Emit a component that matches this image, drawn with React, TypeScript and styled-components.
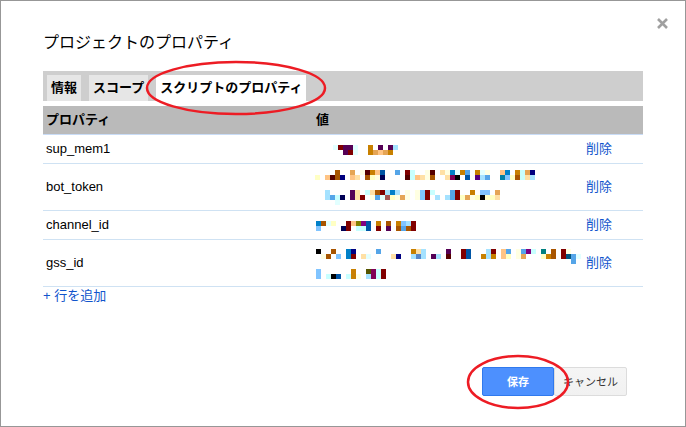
import React from "react";
import styled, { createGlobalStyle } from "styled-components";

const GlobalStyle = createGlobalStyle`
  *, *::before, *::after { box-sizing: border-box; }
  body {
    margin: 0;
    background: #fff;
    color: #000;
    font-family: "Liberation Sans", "Noto Sans CJK JP", sans-serif;
    font-size: 13px;
    line-height: 20px;
  }
`;

const Dialog = styled.main`
  position: relative;
  display: flex;
  flex-direction: column;
  min-height: 100vh;
  padding: 30px 42px 28px;
  border: 1px solid #979797;
`;

const CloseButton = styled.button`
  position: absolute;
  top: 16px;
  right: 16px;
  display: flex;
  padding: 0;
  border: 0;
  background: none;
  cursor: pointer;
`;

const Title = styled.h1`
  margin: 0 0 16px;
  font-size: 16px;
  font-weight: 400;
  line-height: 24px;
`;

const TabBar = styled.div`
  display: flex;
  gap: 8px;
  margin-bottom: 5px;
  padding: 4px 4px 0;
  background: #cecece;
`;

const Tab = styled.button<{ $active?: boolean }>`
  position: relative;
  height: 26px;
  padding: 0 4px;
  border: 0;
  background: ${(p) => (p.$active ? "#fff" : "#e6e6e6")};
  color: #000;
  font: inherit;
  font-weight: 700;
  white-space: nowrap;
  cursor: pointer;
`;

const Table = styled.table`
  width: 100%;
  table-layout: fixed;
  border-collapse: separate;
  border-spacing: 0;
`;

const Column = styled.col<{ $share: number }>`
  width: ${(p) => p.$share}%;
`;

const HeadCell = styled.th`
  height: 29px;
  padding: 0 3px;
  border-bottom: 1px solid #c9dcf6;
  background: #bababa;
  background-clip: padding-box;
  text-align: left;
`;

const Cell = styled.td<{ $tall: boolean }>`
  height: ${(p) => (p.$tall ? 47 : 29)}px;
  padding: 0 3px;
  border-bottom: 1px solid #cfe2f3;
  vertical-align: middle;
`;

const ValueCell = styled(Cell)`
  padding-top: 1px;
`;

const Link = styled.a`
  color: #15c;
  text-decoration: none;
`;

const AddRow = styled(Link)`
  align-self: flex-start;
  margin-bottom: 62px;
  line-height: 18px;
`;

const Actions = styled.footer`
  display: flex;
  justify-content: flex-end;
  padding-right: 16px;
`;

const ActionButton = styled.button<{ $primary?: boolean }>`
  position: relative;
  z-index: ${(p) => (p.$primary ? 1 : 0)};
  min-width: ${(p) => (p.$primary ? 72 : 73)}px;
  height: 29px;
  padding: 0 8px;
  border: 1px solid ${(p) => (p.$primary ? "#3079ed" : "#dcdcdc")};
  border-radius: 2px;
  background: ${(p) => (p.$primary ? "#4d90fe" : "linear-gradient(#f5f5f5, #f1f1f1)")};
  color: ${(p) => (p.$primary ? "#fff" : "#333")};
  font: inherit;
  font-size: 11px;
  font-weight: ${(p) => (p.$primary ? 700 : 400)};
  cursor: pointer;
`;

const Ring = styled.svg<{ $left: number }>`
  position: absolute;
  top: 50%;
  left: ${(p) => p.$left}%;
  transform: translate(-50%, -50%);
  z-index: 2;
  pointer-events: none;
`;

const MosaicSvg = styled.svg`
  display: block;
  overflow: visible;
  shape-rendering: crispEdges;
`;

const COLORS: Record<string, string> = {
  k: "#000000", N: "#000055", n: "#000080", b: "#0055a5", u: "#0080c8",
  s: "#55a5e8", S: "#80c4ff", l: "#a5e2ff", c: "#c8ffff", e: "#e2ffff",
  y: "#ffffe2", L: "#ffffc4", w: "#ffe0a5", p: "#ffc485", t: "#e5a555",
  G: "#c88000", B: "#a85500", M: "#800000", D: "#550000", P: "#550055",
  m: "#800055", v: "#550080", V: "#800080", T: "#0080a5", q: "#008080",
  Q: "#005580", O: "#808000", o: "#555500", r: "#a55555", R: "#5585c8",
};

type MosaicData = { offset: number; rows: string[] };

const CELL = 5;

function Mosaic({ offset, rows }: MosaicData) {
  const columns = Math.max(...rows.map((row) => row.length));
  return (
    <MosaicSvg width={columns * CELL} height={rows.length * CELL} role="img" aria-label="***">
      {rows.flatMap((row, y) =>
        [...row].map((code, x) =>
          COLORS[code] ? (
            <rect key={`${x}-${y}`} x={offset + x * CELL} y={y * CELL} width={CELL} height={CELL} fill={COLORS[code]} />
          ) : null,
        ),
      )}
    </MosaicSvg>
  );
}

const PROPERTIES: { name: string; value: MosaicData }[] = [
  {
    name: "sup_mem1",
    value: { offset: 17, rows: ["eMPPe..G.P.Pl", "..PMe..GtptG"] },
  },
  {
    name: "bot_token",
    value: {
      offset: -1,
      rows: [
        "....B..t.yDGpb..s.Mc..yD.wyueGs.Gey..pu.Gctn",
        "L.pDBn.pw.BLyN....DcpwyB..wmk.b.vls..TSLBcwl",
        "",
        "",
        "..l....Pw.cwBMlul.y.ySMc...sM..G.SS.t",
        "..lscN.PwM.yserLyty.ySM.l.lsMLtyLkLLw",
        "....e",
      ],
    },
  },
  {
    name: "channel_id",
    value: { offset: 0, rows: ["uBeL..MpOVb.G.B.GSlM", "S....NM.ccb.M.P.BsBM"] },
  },
  {
    name: "gss_id",
    value: {
      offset: 0,
      rows: [
        "k..B..un....s......Gwl....P..Mb...lM.ps.ysVc.q.B.My",
        ".yB.S.uM.we....wn..lRl.Pl.D..Mb..GlG.pL.yt...LGB.MQse",
        "...................................................s",
        "",
        "S......G..omcM",
        "S.ckb.cGy.lmcM",
      ],
    },
  },
];

function RedRing({ rx, ry, left = 50 }: { rx: number; ry: number; left?: number }) {
  const width = rx * 2 + 4;
  const height = ry * 2 + 4;
  return (
    <Ring $left={left} width={width} height={height} aria-hidden="true">
      <ellipse cx={width / 2} cy={height / 2} rx={rx} ry={ry} fill="none" stroke="#ed1c24" strokeWidth="2.5" />
    </Ring>
  );
}

export default function App() {
  return (
    <>
      <GlobalStyle />
      <Dialog>
        <CloseButton type="button" aria-label="閉じる">
          <svg width="13" height="13" viewBox="0 0 13 13">
            <path d="M2 2 11 11M11 2 2 11" stroke="#a0a0a0" strokeWidth="2.6" />
          </svg>
        </CloseButton>
        <Title>プロジェクトのプロパティ</Title>
        <TabBar role="tablist">
          <Tab type="button" role="tab" aria-selected="false">情報</Tab>
          <Tab type="button" role="tab" aria-selected="false">スコープ</Tab>
          <Tab type="button" role="tab" aria-selected="true" $active>
            スクリプトのプロパティ
            <RedRing rx={89} ry={26} left={53} />
          </Tab>
        </TabBar>
        <Table>
          <colgroup>
            <Column $share={45} />
            <Column $share={45} />
            <Column $share={10} />
          </colgroup>
          <thead>
            <tr>
              <HeadCell scope="col">プロパティ</HeadCell>
              <HeadCell scope="col">値</HeadCell>
              <HeadCell as="td" />
            </tr>
          </thead>
          <tbody>
            {PROPERTIES.map(({ name, value }) => {
              const tall = value.rows.length > 2;
              return (
                <tr key={name}>
                  <Cell $tall={tall}>{name}</Cell>
                  <ValueCell $tall={tall}>
                    <Mosaic {...value} />
                  </ValueCell>
                  <Cell $tall={tall}>
                    <Link href="#delete">削除</Link>
                  </Cell>
                </tr>
              );
            })}
          </tbody>
        </Table>
        <AddRow href="#add">+ 行を追加</AddRow>
        <Actions>
          <ActionButton type="button" $primary>
            保存
            <RedRing rx={50} ry={26} />
          </ActionButton>
          <ActionButton type="button">キャンセル</ActionButton>
        </Actions>
      </Dialog>
    </>
  );
}
